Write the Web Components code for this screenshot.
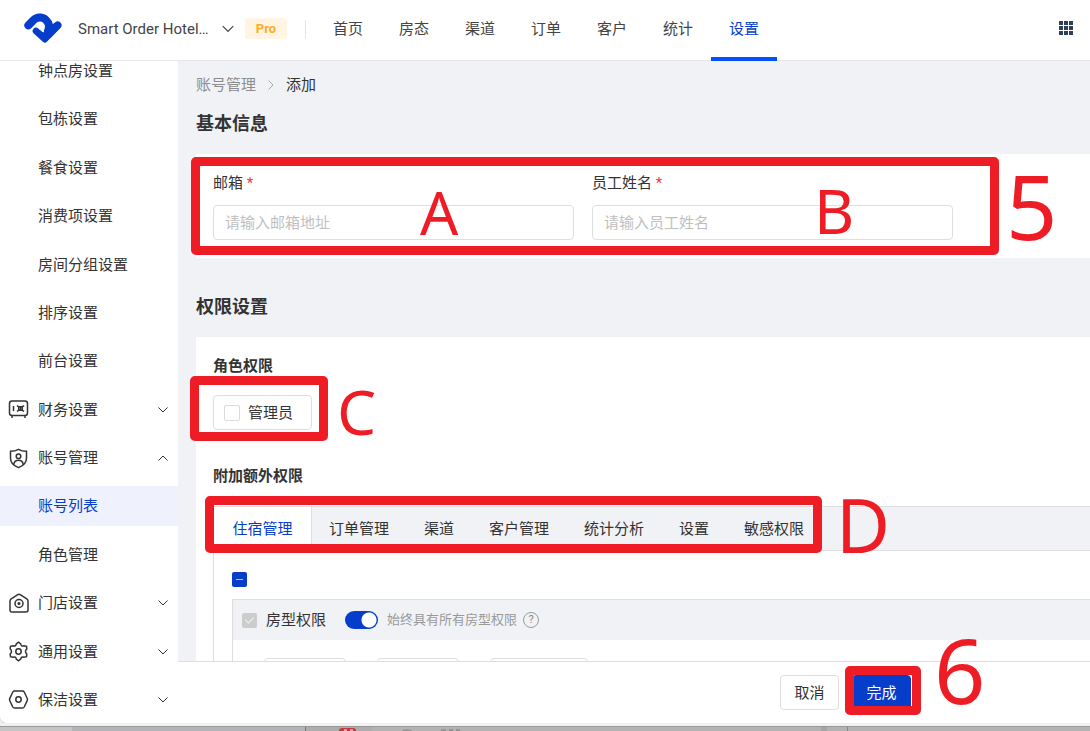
<!DOCTYPE html>
<html lang="zh-CN">
<head>
<meta charset="utf-8">
<title>账号管理 - 添加</title>
<style>
  html, body { height: 100%; margin: 0; }
  body {
    font: 15px/22px Roboto, "Noto Sans CJK SC", sans-serif;
    color: #333;
    background: #fff;
    overflow: hidden;
    --brand: #063dca;
    --line: #dedede;
    --soft: #f1f2f6;
    --mark: #ee1c25;
  }
</style>
</head>
<body>
<hotel-app></hotel-app>
<script>
const define = (name, html, setup) => {
  const tpl = document.createElement('template');
  tpl.innerHTML = html;
  customElements.define(name, class extends HTMLElement {
    constructor() {
      super();
      this.attachShadow({ mode: 'open' }).append(tpl.content.cloneNode(true));
    }
    connectedCallback() { if (setup) setup(this, this.shadowRoot); }
  });
};

/* ---------- small parts ---------- */
const icons = {
  down: '<path d="M1.500 3.500 6 8l4.500-4.500"/>',
  safe: '<rect x="1.500" y="2" width="18" height="14.500" rx="2.500"/><path d="M4 17v2M17 17v2M5.500 7v5M9 6.500l1.500 1.200h4L16 6.500M9 12.500l1.500-1.200h4l1.500 1.200M10.700 7.700v3.600M14.300 7.700v3.600M12.500 8.500v2"/>',
  shield: '<path d="M10.500 1.300c2.500 1.500 5 2 8 2v7c0 4.500-3 7.500-8 9.300-5-1.800-8-4.800-8-9.300v-7c3 0 5.500-.5 8-2z"/><circle cx="10.500" cy="8.200" r="2.300"/><path d="M5.800 16.500c.3-3 2-4.300 4.700-4.300s4.400 1.300 4.700 4.300"/>',
  home: '<path d="M2 8c0-1 .4-1.700 1.200-2.200L9.800 1.600c.9-.6 1.500-.6 2.400 0l6.600 4.200C19.600 6.300 20 7 20 8v9c0 1.300-.7 2-2 2H4c-1.300 0-2-.7-2-2z"/><circle cx="11" cy="10.500" r="4"/><circle cx="11" cy="10.500" r=".8" fill="#333"/>',
  gear: '<path d="M8.300 2.800 10.500 1.200l2.200 1.600c.2 2 1.500 2.700 3.300 1.900l2.500.6.300 2.700c-1.700 1.300-1.700 3.700 0 5l-.3 2.700-2.500.6c-1.800-.8-3.100 0-3.300 1.900l-2.200 1.600-2.200-1.600c-.2-2-1.500-2.700-3.300-1.900l-2.500-.6-.3-2.700c1.700-1.300 1.700-3.700 0-5l.3-2.700 2.500-.6c1.800.8 3.100 0 3.300-1.900z"/><circle cx="10.500" cy="10.500" r="2.700"/>',
  hex: '<path d="M6.500 2h8c.8 0 1.300.3 1.700 1l3 6.300c.4.800.4 1.600 0 2.400l-3 6.300c-.4.700-.9 1-1.700 1h-8c-.8 0-1.300-.3-1.700-1l-3-6.300c-.4-.8-.4-1.600 0-2.400l3-6.300c.4-.7.900-1 1.700-1z"/><circle cx="10.500" cy="10.500" r="2.700"/>'
};
define('line-icon', `
  <style>
    :host { display: inline-flex; width: 21px; height: 21px; flex: none; }
    :host([name=down]) { width: 12px; height: 12px; }
    :host([big]) { width: 14px; height: 14px; }
    :host([flip]) { transform: rotate(180deg); }
    svg { width: 100%; height: 100%; fill: none; stroke: currentColor; stroke-width: 1.500; }
    :host([name=down]) svg { stroke-width: 1; }
  </style><svg aria-hidden="true"></svg>`,
  (el, root) => {
    const svg = root.querySelector('svg'), name = el.getAttribute('name');
    svg.setAttribute('viewBox', name === 'down' ? '0 0 12 12' : '0 0 21 21');
    svg.innerHTML = icons[name];
  });

/* ---------- header ---------- */
define('top-bar', `
  <style>
    :host { display: flex; align-items: center; height: 60px; padding-left: 20px; background: #fff; border-bottom: 1px solid #e4e6e9; position: relative; }
    .logo { width: 46px; height: 40px; flex: none; margin-bottom: 4px; }
    .hotel { display: flex; align-items: center; gap: 9px; margin: 0 0 2px 12px; padding: 0; border: 0; background: none; font: 15px/22px Roboto, sans-serif; color: #444; }
    .hotel span { width: 134px; text-align: left; white-space: nowrap; }
    .pro { margin: 0 0 3px 10px; width: 42px; height: 21px; border-radius: 3px; background: #fff5e2; color: #ffab1f; font: bold 13px/21px Roboto, sans-serif; text-align: center; }
    .rule { width: 1px; height: 18px; margin: 0 9px 3px 18px; background: #e2e2e2; }
    nav { display: flex; height: 61px; align-self: flex-start; }
    nav a { width: 66px; box-sizing: border-box; padding-top: 18px; text-align: center; color: #444; text-decoration: none; }
    nav a[aria-current] { color: var(--brand); box-shadow: inset 0 -4px #0350ff; }
    .apps { margin: 0 17px 4px auto; padding: 0; border: 0; background: none; width: 14px; height: 14px; }
    .apps svg { display: block; }
  </style>
  <svg class="logo" viewBox="0 0 138 120" role="img" aria-label="订单来了">
    <g fill="none" stroke="#063dca" stroke-width="24" stroke-linecap="round">
      <path d="M25 52 39 38C50 26 68 26 78 36 88 46 90 56 84 68"/>
      <path stroke-width="20" d="m48 69 25 23"/>
      <path stroke-width="23" d="M113 52 85 80"/>
    </g>
    <path fill="#063dca" d="M90 46Q98 51 104 44L122 58 80 102Q75 107 70 102L52 83 61 67Q68 76 75 71 82 66 80 58z"/>
  </svg>
  <button class="hotel"><span>Smart Order Hotel…</span><line-icon name="down" big></line-icon></button>
  <span class="pro">Pro</span><span class="rule"></span>
  <nav>
    <a href="#home">首页</a><a href="#rooms">房态</a><a href="#channels">渠道</a><a href="#orders">订单</a><a href="#guests">客户</a><a href="#stats">统计</a><a href="#settings" aria-current="page">设置</a>
  </nav>
  <button class="apps" aria-label="应用"><svg width="14" height="14" fill="#2b4058"><path d="M0 0h4v4H0zM5 0h4v4H5zM10 0h4v4h-4zM0 5h4v4H0zM5 5h4v4H5zM10 5h4v4h-4zM0 10h4v4H0zM5 10h4v4H5zM10 10h4v4h-4z"/></svg></button>`);

/* ---------- sidebar ---------- */
define('side-item', `
  <style>
    :host { display: block; }
    a { display: flex; align-items: center; height: 40px; padding: 0 9px 0 38px; color: #333; text-decoration: none; }
    :host([icon]) a { padding-left: 8px; }
    .label { flex: 1; }
    :host([icon]) .label { margin-left: 9px; }
    :host([active]) a { background: #eff2fc; color: var(--brand); }
  </style>
  <a href="#"><span class="label"><slot></slot></span></a>`,
  (el, root) => {
    const a = root.querySelector('a'), icon = el.getAttribute('icon');
    if (!icon || a.querySelector('line-icon')) return;
    a.insertAdjacentHTML('afterbegin', `<line-icon name="${icon}"></line-icon>`);
    a.insertAdjacentHTML('beforeend', `<line-icon name="down" ${el.hasAttribute('open') ? 'flip' : ''}></line-icon>`);
  });
define('side-menu', `
  <style>
    :host { display: block; overflow: hidden; background: #fff; }
    nav { height: 100%; box-sizing: border-box; padding-bottom: 3px; display: flex; flex-direction: column; justify-content: space-between; }
    side-item:first-child { margin-top: -10px; }
  </style>
  <nav>
    <side-item>钟点房设置</side-item><side-item>包栋设置</side-item><side-item>餐食设置</side-item>
    <side-item>消费项设置</side-item><side-item>房间分组设置</side-item><side-item>排序设置</side-item>
    <side-item>前台设置</side-item><side-item icon="safe">财务设置</side-item>
    <side-item icon="shield" open>账号管理</side-item><side-item active>账号列表</side-item>
    <side-item>角色管理</side-item><side-item icon="home">门店设置</side-item>
    <side-item icon="gear">通用设置</side-item><side-item icon="hex">保洁设置</side-item>
  </nav>`);

/* ---------- form parts ---------- */
define('text-field', `
  <style>
    :host { display: block; }
    label { display: block; line-height: 23px; margin-bottom: 10px; }
    i { font-style: normal; color: #f5333b; }
    input { display: block; width: 100%; height: 35px; box-sizing: border-box; padding: 0 11px; border: 1px solid var(--line); border-radius: 4px; background: #fff; font: inherit; color: inherit; }
    input::placeholder { color: #bfbfbf; opacity: 1; }
  </style>
  <label for="f"><slot></slot> <i>*</i></label><input id="f" type="text">`,
  (el, root) => { root.querySelector('input').placeholder = el.getAttribute('hint'); });

define('check-chip', `
  <style>
    :host { display: inline-block; }
    label { display: flex; align-items: center; gap: 8px; height: 35px; box-sizing: border-box; padding: 0 18px 0 10px; border: 1px solid var(--line); border-radius: 4px; background: #fff; }
    input { appearance: none; width: 16px; height: 16px; margin: 0; border: 1px solid #d9d9d9; border-radius: 2px; background: #fff; }
  </style>
  <label><input type="checkbox"><slot></slot></label>`);

define('form-card', `
  <style>
    :host { display: block; }
    h2 { margin: 0 0 18px; font-size: 18px; line-height: 25px; font-weight: 700; }
    section { background: #fff; padding: 18px 0 18px 17px; }
  </style>
  <h2><slot name="title"></slot></h2><section><slot></slot></section>`);

define('permission-tabs', `
  <style>
    :host { display: block; }
    .tabs { display: flex; gap: 35px; height: 45px; box-sizing: border-box; background: var(--soft); border: solid var(--line); border-width: 1px 0 1px 1px; }
    button { padding: 0; border: 0; background: none; font: inherit; color: inherit; white-space: nowrap; }
    button[aria-selected=true] { width: 98px; margin-right: -18px; border-right: 1px solid var(--line); background: #fff; color: var(--brand); }
    .panel { border-left: 1px solid var(--line); padding: 21px 0 18px 18px; }
    input[type=checkbox] { appearance: none; display: block; flex: none; width: 15px; height: 15px; margin: 0; border-radius: 2px; }
    .all { background: linear-gradient(#b4c5f2, #b4c5f2) center/7px 1px no-repeat var(--brand); }
    .rooms { margin-top: 12px; border: solid var(--line); border-width: 1px 0 0 1px; }
    .head { display: flex; align-items: center; height: 40px; padding-left: 9px; background: var(--soft); }
    .head input.on { background: #ccc; position: relative; }
    .on::after { content: ""; position: absolute; left: 5px; top: 2px; width: 4px; height: 7px; border: solid #f5f5f5; border-width: 0 1px 1px 0; transform: rotate(45deg); }
    .head label { margin-left: 9px; }
    .head .switch { width: 33px; height: 18px; margin: 0 9px 0 19px; border-radius: 9px; background: radial-gradient(circle at 24px 9px, #fff 7px, transparent 8px) var(--brand); }
    .head .note { margin: 0; font-size: 13px; color: #999; }
    .help { margin-left: 6px; width: 16px; height: 16px; box-sizing: border-box; border: 1px solid #999; border-radius: 50%; font-size: 11px; line-height: 14px; text-align: center; color: #888; }
    .list { display: flex; gap: 31px; padding: 18px 0 18px 31px; }
    .list span { width: 82px; height: 33px; border: 1px solid var(--line); border-radius: 4px; box-sizing: border-box; }
    .list span:last-child { width: 98px; }
  </style>
  <div class="tabs" role="tablist">
    <button role="tab" aria-selected="true">住宿管理</button><button role="tab">订单管理</button><button role="tab">渠道</button><button role="tab">客户管理</button><button role="tab">统计分析</button><button role="tab">设置</button><button role="tab">敏感权限</button>
  </div>
  <div class="panel" role="tabpanel">
    <input class="all" type="checkbox" aria-label="全选">
    <div class="rooms">
      <div class="head">
        <input class="on" id="room" type="checkbox" checked disabled><label for="room">房型权限</label>
        <input class="switch" id="always" type="checkbox" role="switch" checked><label class="note" for="always">始终具有所有房型权限</label>
        <span class="help">?</span>
      </div>
      <div class="list"><span></span><span></span><span></span></div>
    </div>
  </div>`);

/* ---------- main column ---------- */
define('account-form', `
  <style>
    :host { display: grid; grid-template-rows: 1fr auto; min-width: 0; min-height: 0; background: var(--soft); }
    .scroll { overflow: hidden; padding: 13px 0 0 18px; }
    .crumbs { display: flex; align-items: center; gap: 9px; margin-bottom: 15px; }
    .crumbs a { color: #8c8c8c; text-decoration: none; }
    .crumbs line-icon { transform: rotate(-90deg); color: #aaa; }
    form-card + form-card { margin-top: 36px; }
    .fields { display: grid; grid-template-columns: 1fr 1fr; gap: 18px; max-width: 740px; }
    h3 { margin: 0; font-size: 15px; line-height: 23px; font-weight: 700; }
    check-chip { margin: 17px 0 35px; vertical-align: top; }
    permission-tabs { margin-top: 18px; }
    footer { display: flex; justify-content: flex-end; gap: 13px; padding: 13px 179px 13px 0; border-top: 1px solid var(--line); background: #fff; }
    footer button { width: 59px; height: 35px; padding: 0; border: 1px solid var(--line); border-radius: 4px; background: #fff; font: inherit; color: inherit; }
    footer .ok { border-color: var(--brand); background: var(--brand); color: #fff; }
  </style>
  <div class="scroll">
    <div class="crumbs"><a href="#accounts">账号管理</a><line-icon name="down"></line-icon><span>添加</span></div>
    <form-card><span slot="title">基本信息</span>
      <div class="fields"><text-field hint="请输入邮箱地址">邮箱</text-field><text-field hint="请输入员工姓名">员工姓名</text-field></div>
    </form-card>
    <form-card><span slot="title">权限设置</span>
      <h3>角色权限</h3><check-chip>管理员</check-chip>
      <h3>附加额外权限</h3><permission-tabs></permission-tabs>
    </form-card>
  </div>
  <footer><button>取消</button><button class="ok">完成</button></footer>`);

/* ---------- annotations drawn over the page ---------- */
define('mark-layer', `
  <style>
    :host { position: absolute; inset: 0; pointer-events: none; overflow: hidden; color: var(--mark); font-family: "Noto Sans", sans-serif; }
    .box { position: absolute; box-sizing: border-box; border: 9px solid var(--mark); border-radius: 5px; }
    b { position: absolute; font-weight: 400; line-height: 1; }
    .form { left: 191px; top: 157px; width: 808px; height: 98px; }
    .role { left: 190px; top: 376px; width: 138px; height: 65px; }
    .tabs { left: 205px; top: 496px; width: 617px; height: 57px; }
    .done { left: 845px; top: 666px; width: 76px; height: 49px; }
    .a { left: 420px; top: 182px; font-size: 60px; }
    .b { left: 814px; top: 179px; font-size: 62px; }
    .c { left: 337px; top: 380px; font-size: 62px; }
    .d { left: 836px; top: 488px; font-size: 74px; }
    .n5 { left: 1006px; top: 160px; font-size: 90px; }
    .n6 { left: 934px; top: 624px; font-size: 90px; }
  </style>
  <div class="box form"></div><div class="box role"></div><div class="box tabs"></div><div class="box done"></div>
  <b class="a">A</b><b class="b">B</b><b class="c">C</b><b class="d">D</b><b class="n5">5</b><b class="n6">6</b>`);

/* ---------- window edge with the desktop showing below ---------- */
define('window-edge', `
  <style>
    :host { display: block; height: 8px; background: #f1f1f1; }
    svg { display: block; width: 100%; height: 8px; }
  </style>
  <svg aria-hidden="true">
    <rect y="4" width="100%" height="4" fill="#b3b3b3"/><rect y="4" width="72" height="4" fill="#c5c5c5"/>
    <rect x="72" y="4" width="233" height="4" fill="#b2b4b7"/><rect x="305" y="4" width="1" height="4" fill="#777"/>
    <rect x="306" y="4" width="66" height="4" fill="#adadad"/><rect x="339" y="5" width="17" height="8" rx="3" fill="#c5393d"/>
    <path d="M344 7h3m3 0h3" stroke="#fff"/><ellipse cx="407" cy="8" rx="5" ry="2" fill="#999"/>
    <path d="M441 7h5m3 0h4m3 0h4" stroke="#777"/><rect x="821" y="4" width="6" height="4" fill="#a5a5a5"/>
    <rect x="847" y="4" width="1" height="4" fill="#888"/><rect y="3" width="100%" height="1" fill="#999"/>
  </svg>`);

define('hotel-app', `
  <style>
    :host { display: grid; grid-template-rows: auto 1fr auto; height: 100vh; position: relative; background: #f1f1f1; }
    .body { display: grid; grid-template-columns: 178px 1fr; min-height: 0; overflow: hidden; border-bottom-left-radius: 7px; box-shadow: 0 1px #cfcfcf; }
    side-menu, account-form { min-height: 0; }
  </style>
  <top-bar></top-bar>
  <div class="body"><side-menu></side-menu><account-form></account-form></div>
  <window-edge></window-edge>
  <mark-layer></mark-layer>`);
</script>
</body>
</html>
